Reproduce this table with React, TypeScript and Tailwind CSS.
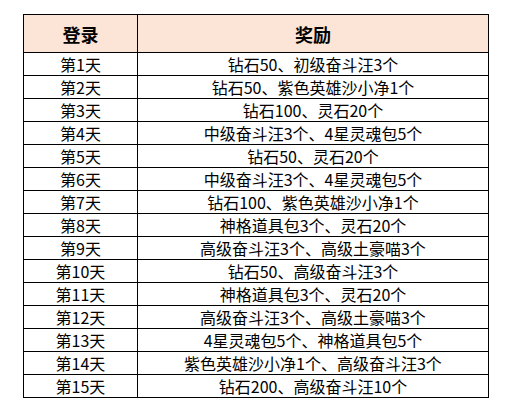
const rows: [string, string][] = [
  ['第1天', '钻石50、初级奋斗汪3个'],
  ['第2天', '钻石50、紫色英雄沙小净1个'],
  ['第3天', '钻石100、灵石20个'],
  ['第4天', '中级奋斗汪3个、4星灵魂包5个'],
  ['第5天', '钻石50、灵石20个'],
  ['第6天', '中级奋斗汪3个、4星灵魂包5个'],
  ['第7天', '钻石100、紫色英雄沙小净1个'],
  ['第8天', '神格道具包3个、灵石20个'],
  ['第9天', '高级奋斗汪3个、高级土豪喵3个'],
  ['第10天', '钻石50、高级奋斗汪3个'],
  ['第11天', '神格道具包3个、灵石20个'],
  ['第12天', '高级奋斗汪3个、高级土豪喵3个'],
  ['第13天', '4星灵魂包5个、神格道具包5个'],
  ['第14天', '紫色英雄沙小净1个、高级奋斗汪3个'],
  ['第15天', '钻石200、高级奋斗汪10个'],
];

export default function App() {
  return (
    <div className="w-[507px] h-[412px] bg-white pl-[23px] pt-[14px] font-['Noto_Sans_CJK_SC',sans-serif] text-black">
      <table className="border-collapse w-[466px] table-fixed">
        <thead>
          <tr className="h-[38px] bg-[#fce4d6]">
            <th className="w-[114px] border border-black text-[18px] font-bold p-0 leading-none">登录</th>
            <th className="border border-black text-[18px] font-bold p-0 leading-none">奖励</th>
          </tr>
        </thead>
        <tbody>
          {rows.map(([day, reward]) => (
            <tr key={day} className="h-[23px]">
              <td className="border border-black text-center text-[16px] p-0 leading-none">{day}</td>
              <td className="border border-black text-center text-[16px] p-0 leading-none">{reward}</td>
            </tr>
          ))}
        </tbody>
      </table>
    </div>
  );
}
